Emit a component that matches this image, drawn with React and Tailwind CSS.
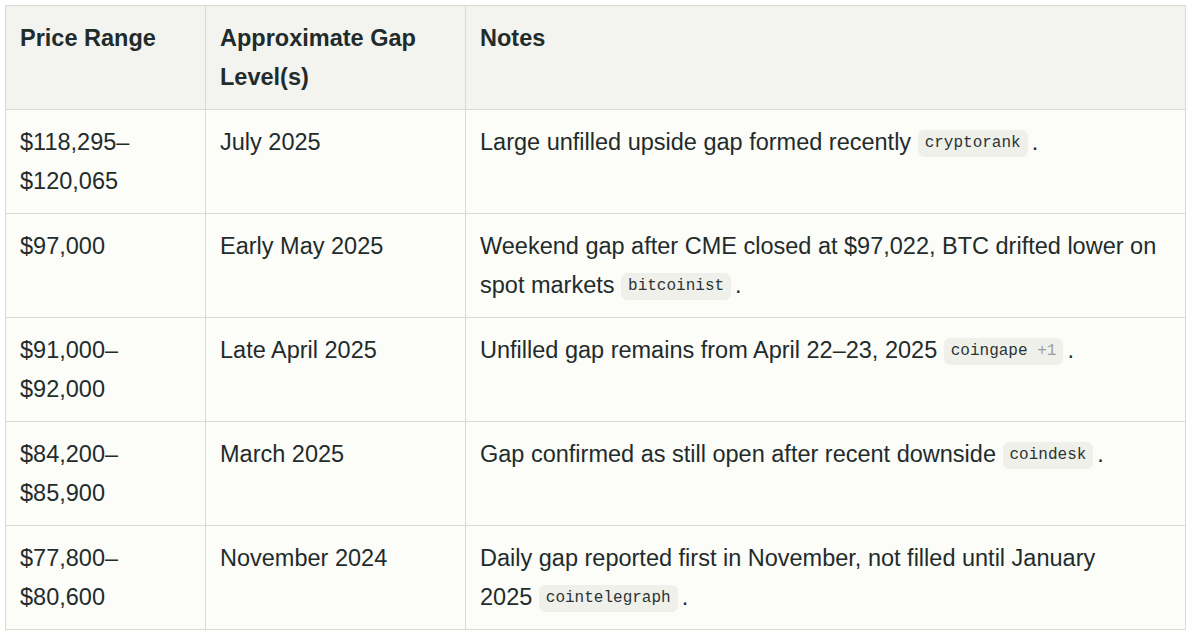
import React from "react";

const rows = [
  { price: "$118,295–$120,065", level: "July 2025", lead: "Large unfilled upside gap formed", last: "recently", cite: "cryptorank" },
  { price: "$97,000", level: "Early May 2025", lead: "Weekend gap after CME closed at $97,022, BTC drifted lower on spot", last: "markets", cite: "bitcoinist" },
  { price: "$91,000–$92,000", level: "Late April 2025", lead: "Unfilled gap remains from April 22–23,", last: "2025", cite: "coingape", more: "+1" },
  { price: "$84,200–$85,900", level: "March 2025", lead: "Gap confirmed as still open after recent", last: "downside", cite: "coindesk" },
  { price: "$77,800–$80,600", level: "November 2024", lead: "Daily gap reported first in November, not filled until January", last: "2025", cite: "cointelegraph" },
];

const Cite = ({ name, more }) => (
  <span className="inline-block align-[3px] rounded-md bg-[#f0f0eb] px-[7px] font-['Liberation_Mono',monospace] text-[16px] leading-[27px] text-[#2a3433]">
    {name}
    {more && <span className="text-[#9b9e9c]"> {more}</span>}
  </span>
);

export default function App() {
  return (
    <div className="min-h-screen bg-white pl-[5px] pt-[5px] font-['Liberation_Sans',Arial,sans-serif] text-[#1f2c2b]">
      <table className="w-[1181px] table-fixed border-collapse border border-[#dadad5] text-[23.5px] leading-[38.5px]">
        <colgroup>
          <col className="w-[200px]" />
          <col className="w-[260px]" />
          <col />
        </colgroup>
        <thead className="bg-[#f3f3ef]">
          <tr>
            <th className="border border-[#dadad5] px-[14px] py-[13px] text-left align-top font-semibold">Price Range</th>
            <th className="border border-[#dadad5] px-[14px] py-[13px] text-left align-top font-semibold">Approximate Gap Level(s)</th>
            <th className="border border-[#dadad5] px-[14px] py-[13px] text-left align-top font-semibold">Notes</th>
          </tr>
        </thead>
        <tbody className="bg-[#fcfcf9]">
          {rows.map((r) => (
            <tr key={r.price}>
              <td className="border border-[#dadad5] px-[14px] py-[13px] align-top">{r.price}</td>
              <td className="border border-[#dadad5] px-[14px] py-[13px] align-top">{r.level}</td>
              <td className="border border-[#dadad5] px-[14px] py-[13px] align-top">
                {r.lead}{" "}
                <span className="whitespace-nowrap">
                  {r.last} <Cite name={r.cite} more={r.more} /><span className="ml-1">.</span>
                </span>
              </td>
            </tr>
          ))}
        </tbody>
      </table>
    </div>
  );
}
